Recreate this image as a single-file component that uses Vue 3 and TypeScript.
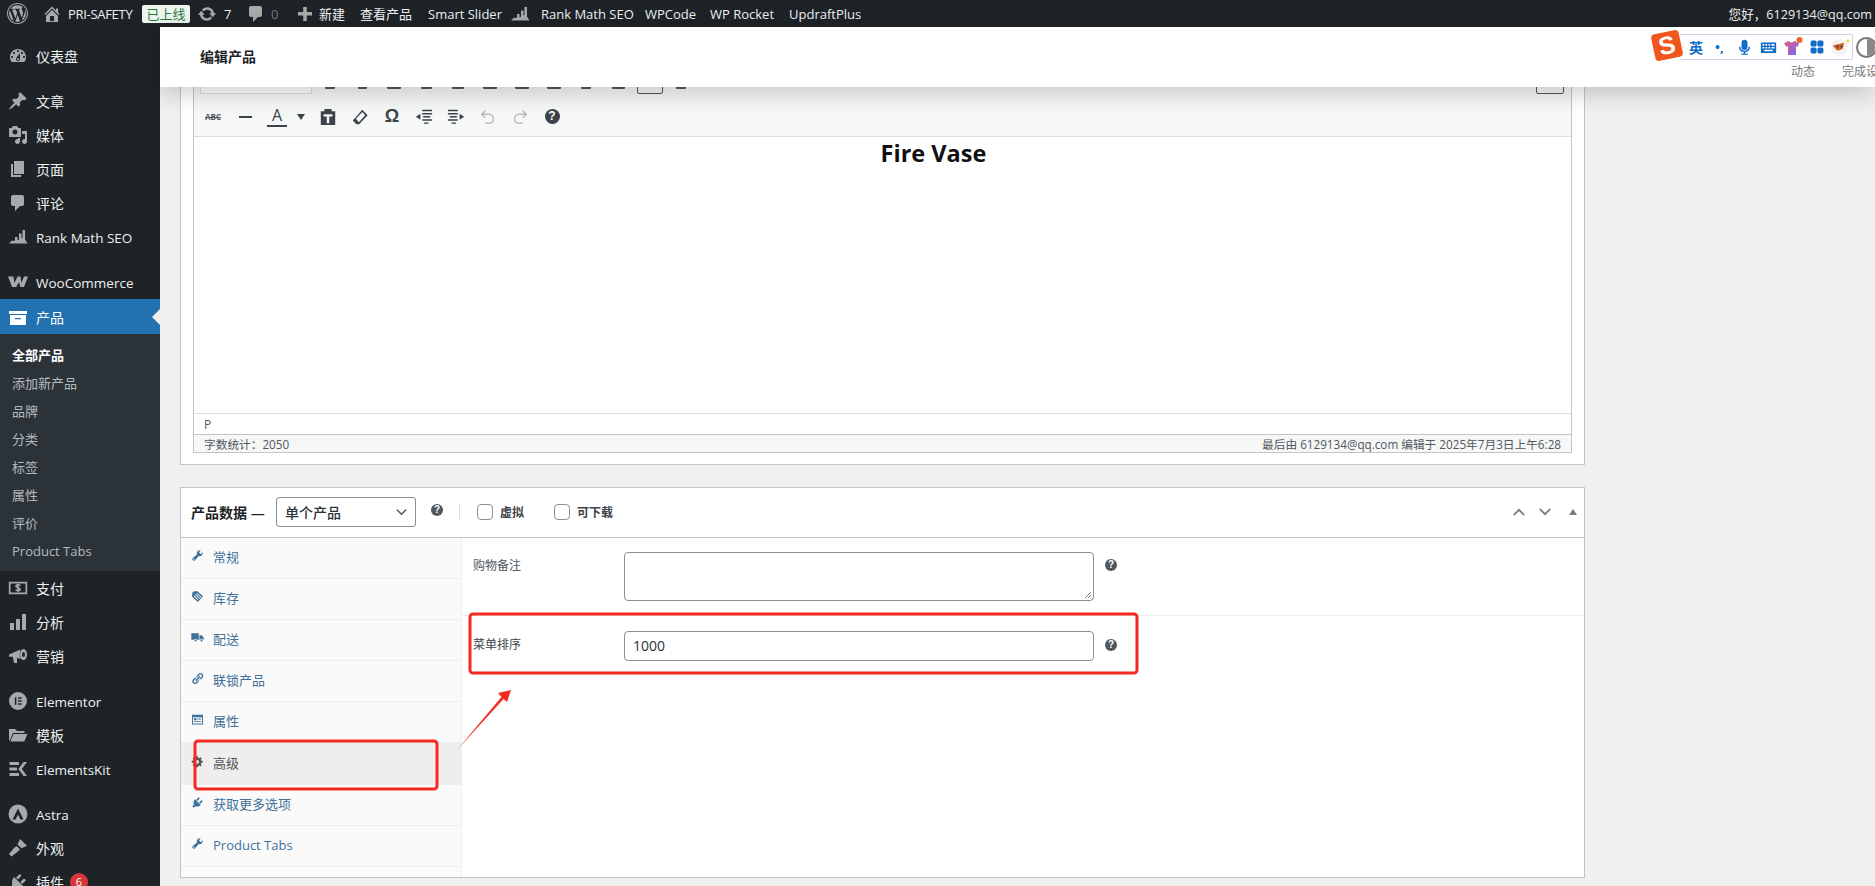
<script setup lang="ts">
interface Ico { d: string; s?: string }
interface MenuItem { label: string; icon: Ico; sep?: boolean; active?: boolean; badge?: string }

const p = {
  wp: 'M20 10c0-5.52-4.48-10-10-10S0 4.48 0 10s4.48 10 10 10 10-4.48 10-10zM10 1.01c4.96 0 8.99 4.03 8.99 8.99s-4.03 8.99-8.99 8.99S1.01 14.96 1.01 10 5.04 1.01 10 1.01zM8.01 14.82L4.96 6.61c.49-.03 1.05-.08 1.05-.08.43-.05.38-1.01-.06-.99 0 0-1.29.1-2.13.1-.15 0-.33 0-.52-.01 1.44-2.17 3.9-3.6 6.7-3.6 2.09 0 3.99.79 5.41 2.09-.6-.08-1.45.35-1.45 1.42 0 .66.38 1.22.79 1.88.31.54.5 1.22.5 2.21 0 1.34-1.27 4.48-1.27 4.48l-2.71-7.5c.48-.03.75-.16.75-.16.43-.05.38-1.1-.05-1.08 0 0-1.3.11-2.14.11-.78 0-2.11-.11-2.11-.11-.43-.02-.48 1.06-.05 1.08l.84.08 1.12 3.04zm6.02 2.15L16.64 10s.67-1.69.39-3.81c.63 1.14.94 2.42.94 3.81 0 2.96-1.56 5.58-3.94 6.97zM2.68 6.77L6.5 17.25c-2.67-1.3-4.47-4.08-4.47-7.25 0-1.16.2-2.23.65-3.23zm7.45 4.53l2.29 6.25c-.75.27-1.57.42-2.42.42-.72 0-1.41-.11-2.06-.3z',
  home: 'M16 8.5l1.53 1.53-1.06 1.06L10 4.62l-6.47 6.47-1.06-1.06L10 2.5l4 4v-2h2v4zm-6-2.46l6 5.99V18H4v-5.97zM12 17v-5H8v5h4z',
  update: 'M10.2 3.28c3.53 0 6.43 2.61 6.92 6h2.08l-3.5 4-3.5-4h2.32c-.45-1.97-2.21-3.45-4.32-3.45-1.45 0-2.73.71-3.54 1.78L4.95 5.66C6.23 4.2 8.11 3.28 10.2 3.28zm-.4 13.44c-3.52 0-6.43-2.61-6.92-6H.8l3.5-4c1.17 1.33 2.33 2.67 3.5 4H5.48c.45 1.97 2.21 3.45 4.32 3.45 1.45 0 2.73-.71 3.54-1.78l1.71 1.95c-1.28 1.46-3.15 2.38-5.25 2.38z',
  comment: 'M5 2h9c1.1 0 2 .9 2 2v7c0 1.1-.9 2-2 2h-2l-5 5v-5H5c-1.1 0-2-.9-2-2V4c0-1.1.9-2 2-2z',
  plus: 'M17 8v3.5h-5.2V17H8.2v-5.500H3V8h5.200V3h3.600v5z',
  dash: 'M3.76 16h12.48c1.1-1.37 1.76-3.11 1.76-5 0-4.42-3.58-8-8-8s-8 3.58-8 8c0 1.89.66 3.63 1.76 5zM10 4c.55 0 1 .45 1 1s-.45 1-1 1-1-.45-1-1 .45-1 1-1zM6 6c.55 0 1 .45 1 1s-.45 1-1 1-1-.45-1-1 .45-1 1-1zm8 0c.55 0 1 .45 1 1s-.45 1-1 1-1-.45-1-1 .45-1 1-1zm-5.37 5.55L12 7v6c0 1.1-.9 2-2 2s-2-.9-2-2c0-.57.24-1.08.63-1.45zM4 10c.55 0 1 .45 1 1s-.45 1-1 1-1-.45-1-1 .45-1 1-1zm12 0c.55 0 1 .45 1 1s-.45 1-1 1-1-.45-1-1 .45-1 1-1zm-5 3c0-.55-.45-1-1-1s-1 .45-1 1 .45 1 1 1 1-.45 1-1z',
  pin: 'M10.44 3.02l1.82-1.82 6.36 6.35-1.83 1.82c-1.05-.68-2.48-.57-3.41.36l-.75.75c-.92.93-1.04 2.35-.35 3.41l-1.83 1.82-2.41-2.41-2.8 2.79c-.42.42-3.38 2.71-3.8 2.29s1.86-3.39 2.28-3.81l2.79-2.79L4.1 9.36l1.83-1.82c1.05.69 2.48.57 3.4-.36l.75-.75c.93-.92 1.05-2.35.36-3.41z',
  media: 'M13 11V4c0-.55-.45-1-1-1h-1.67L9 1H5L3.67 3H2c-.55 0-1 .45-1 1v7c0 .55.45 1 1 1h10c.55 0 1-.45 1-1zM7 4.5c1.38 0 2.5 1.12 2.5 2.5S8.38 9.5 7 9.5 4.5 8.38 4.5 7 5.62 4.5 7 4.5zM14 6h5v10.5c0 1.38-1.12 2.5-2.5 2.5S14 17.88 14 16.5s1.12-2.5 2.5-2.5c.17 0 .34.02.5.05V9h-3V6zm-4 8.05V13h2v3.5c0 1.38-1.12 2.5-2.5 2.5S7 17.88 7 16.5 8.12 14 9.5 14c.17 0 .34.02.5.05z',
  page: 'M6 15V2h10v13H6zm-1 1h8v2H3V5h2v11z',
  rank: 'M1 16.5l3-3 2 .5 1-.6V10h2.5v3.6l1.5-1V6.5h2.500v5l1-.8V3h2.500v9.500l2.500 4H1z',
  woo: 'M0 4.500h5.500l.8 6.500L9.600 4.500h2.900l.9 6.500 2.600-6.500H20l-4 10.500h-3.700L11 10l-2.800 5H4.100z',
  archive: 'M19 4v3H1V4h18zM2 8h16v10H2V8zm5 3v1.2h6V11H7z',
  pay: 'M.8 3.8h18.4v12.4H.8zM2.5 5.5v9h15v-9z',
  bars: 'M2 11h4v7H2zM8 7h4v11H8zM14 2h4v16h-4z',
  mega: 'M1 8.500l11.500-5C11.500 6.500 11.500 10 12.500 13L9 11.800V17H6l-1.200-6.300L1 10.700zM15.500 3a3.500 5.500 0 1 1 0 11 3.500 5.500 0 0 1 0-11zm0 3a1.500 2.500 0 1 0 0 5 1.500 2.500 0 0 0 0-5z',
  elementor: 'M10 1a9 9 0 1 0 0 18 9 9 0 0 0 0-18zM6.800 6.200h1.600v7.600H6.800zM10 6.200h3.600v1.500H10zM10 9.200h3.600v1.500H10zM10 12.300h3.600v1.500H10z',
  folder: 'M1 4h6l2 2h7.500v2H5L1.800 15.500 1 15zM5.500 9H19.500l-3.200 7.500H2.300z',
  ekit: 'M1.500 3h9.500v3H1.500zM1.500 8.500h7.500v3H1.500zM1.500 14h9.500v3H1.500zM15.500 3H19l-5.200 7 5.200 7h-3.500l-5.200-7z',
  astra: 'M10 .5a9.500 9.500 0 1 0 0 19 9.500 9.500 0 0 0 0-19zM10 4.500l5.500 11h-3L10 10.500l-2.500 5h-3z',
  brush: 'M8.500 8l3.500 3.500-2.400 2.200-6.200 4.800-2.400-2.400 5-6.200zM9.500 6.500L12 1l7 6.800-5.500 2.400z',
  plug: 'M13.11 4.36L9.87 7.6 8 5.73l3.24-3.24c.35-.34 1.05-.2 1.56.32.52.51.66 1.21.31 1.55zm-8 1.77l.91-1.12 9.01 9.01-1.19.84c-.71.71-2.63 1.16-3.82 1.16H6.14L4.9 17.26c-.59.59-1.54.59-2.12 0-.59-.58-.59-1.53 0-2.12l1.24-1.24v-3.88c0-1.13.4-3.19 1.09-3.89zm7.26 3.97l3.24-3.24c.34-.35 1.04-.21 1.55.31.52.51.66 1.21.31 1.55l-3.24 3.25z',
  wrench: 'M16.68 9.77c-1.34 1.34-3.3 1.67-4.95.99l-5.41 6.52c-.99.99-2.59.99-3.58 0s-.99-2.59 0-3.58l6.52-5.41c-.68-1.65-.35-3.61.99-4.95 1.28-1.28 3.12-1.62 4.72-1.06l-2.89 2.89 2.82 2.82 2.86-2.87c.53 1.58.18 3.39-1.08 4.65zM3.81 16.21c.4.39 1.04.39 1.43 0 .4-.4.4-1.04 0-1.43-.39-.4-1.03-.4-1.43 0-.39.39-.39 1.03 0 1.43z',
  tag: 'M9.500 1.500l9 8-8 9-9-8.500 1-7.500zM7 6l-1 1 7 6.500 1-1zM9.500 4.500l-1 1 7 6.500 1-1zM5 8.500l-1 1 6.500 6 1-1z',
  truck: 'M.5 3.500h11.500v10H9a2.200 2.200 0 0 0-4.200 0H.5zM13 6.500h3.500l3 3.500v3.500h-1.200a2.200 2.200 0 0 0-4.200 0H13zM7 13a1.600 1.600 0 1 1 0 3.200A1.600 1.600 0 0 1 7 13zm9.200 0a1.600 1.600 0 1 1 0 3.200 1.600 1.600 0 0 1 0-3.200z',
  link: 'M17.74 2.76c1.68 1.69 1.68 4.41 0 6.1l-1.53 1.52c-1.12 1.12-2.7 1.47-4.14 1.09l2.62-2.61.76-.77.76-.76c.84-.84.84-2.2 0-3.04-.84-.85-2.2-.85-3.04 0l-.77.76-3.38 3.38c-.37-1.44-.02-3.02 1.1-4.14l1.52-1.53c1.69-1.68 4.42-1.68 6.1 0zM8.59 13.43l5.34-5.34c.42-.42.42-1.1 0-1.52-.44-.43-1.13-.39-1.53 0l-5.33 5.34c-.42.42-.42 1.1 0 1.52.44.43 1.13.39 1.52 0zm-.76 2.29l4.14-4.15c.38 1.44.03 3.02-1.09 4.14l-1.52 1.53c-1.69 1.68-4.41 1.68-6.1 0-1.68-1.68-1.68-4.42 0-6.1l1.53-1.52c1.12-1.12 2.7-1.47 4.14-1.1l-4.14 4.15c-.85.84-.85 2.2 0 3.05.84.84 2.2.84 3.04 0z',
  attr: 'M1.500 2.500h17v15h-17zM3 6.500v9.500h14V6.500zM4.500 8h4v3h-4zM10 8.500h5.500v1.500H10zM4.500 12.500h11v1.500h-11z',
  gear: 'M18 12h-2.18c-.17.7-.44 1.35-.81 1.93l1.54 1.54-2.1 2.1-1.54-1.54c-.58.36-1.23.63-1.91.79V19H8v-2.18c-.68-.16-1.33-.43-1.91-.79l-1.54 1.54-2.12-2.12 1.54-1.54c-.36-.58-.63-1.23-.79-1.91H1V9.03h2.17c.16-.7.44-1.35.8-1.94L2.43 5.55l2.1-2.1 1.54 1.54c.58-.37 1.24-.64 1.93-.81V2h3v2.18c.68.16 1.33.43 1.91.79l1.54-1.54 2.12 2.12-1.54 1.54c.36.59.64 1.24.8 1.94H18V12zm-8.5 1.5c1.66 0 3-1.34 3-3s-1.34-3-3-3-3 1.34-3 3 1.34 3 3 3z',
  paste: 'M2 3.500h4V1h8v2.500h4V19H2zM5 7v2.500h3.600V17h2.800V9.500H15V7z',
  eraser: 'M12.500 2L18.500 8 9 18H6L2 14zM12.500 4.500L5.500 12 8.500 15.500 9 15.500 15.800 8z',
  outdent: 'M8 2h11v1.600H8zM8 5.500h11v1.600H8zM9 9h8v1.600H9zM8 12.500h11v1.600H8zM10 16h5v1.600h-5zM1 9.800l5-3.300v6.600z',
  indent: 'M1 2h11v1.600H1zM1 5.500h11v1.600H1zM3 9h8v1.600H3zM1 12.500h11v1.600H1zM5 16h5v1.600H5zM19 9.800l-5-3.300v6.600z',
  mic: 'M10 1a3.500 3.500 0 0 1 3.500 3.500v5a3.500 3.500 0 0 1-7 0v-5A3.500 3.500 0 0 1 10 1zM3.500 9h1.600a4.900 4.900 0 0 0 9.800 0h1.600a6.500 6.500 0 0 1-5.700 6.400V17h3v1.600H6.200V17h3v-1.600A6.500 6.500 0 0 1 3.500 9z',
  kbd: 'M1 4h18v12.500H1zM3 6v2h2V6zm3.500 0v2h2V6zM10 6v2h2V6zm3.500 0v2h3.500V6zM3 9.300v2h2v-2zm3.500 0v2h2v-2zm3.500 0v2h2v-2zm3.500 0v2h3.500v-2zM5 12.700v1.800h10v-1.800z'
}

const menu: MenuItem[] = [
  { label: '仪表盘', icon: { d: p.dash } },
  { label: '文章', icon: { d: p.pin }, sep: true },
  { label: '媒体', icon: { d: p.media } },
  { label: '页面', icon: { d: p.page } },
  { label: '评论', icon: { d: p.comment } },
  { label: 'Rank Math SEO', icon: { d: p.rank } },
  { label: 'WooCommerce', icon: { d: p.woo }, sep: true },
  { label: '产品', icon: { d: p.archive }, active: true }
]
const sub = ['全部产品', '添加新产品', '品牌', '分类', '标签', '属性', '评价', 'Product Tabs']
const menu2: MenuItem[] = [
  { label: '支付', icon: { d: p.pay, s: 'M12.300 7.600c-.7-1-4.400-1.200-4.400.6 0 2 4.400.9 4.400 3.200 0 1.700-3.900 1.500-4.700.4M10 5.800v8.400' } },
  { label: '分析', icon: { d: p.bars } },
  { label: '营销', icon: { d: p.mega } },
  { label: 'Elementor', icon: { d: p.elementor }, sep: true },
  { label: '模板', icon: { d: p.folder } },
  { label: 'ElementsKit', icon: { d: p.ekit } },
  { label: 'Astra', icon: { d: p.astra }, sep: true },
  { label: '外观', icon: { d: p.brush } },
  { label: '插件', icon: { d: p.plug }, badge: '6' }
]
const tabs = [
  { label: '常规', d: p.wrench },
  { label: '库存', d: p.tag },
  { label: '配送', d: p.truck },
  { label: '联锁产品', d: p.link },
  { label: '属性', d: p.attr },
  { label: '高级', d: p.gear, active: true },
  { label: '获取更多选项', d: p.plug },
  { label: 'Product Tabs', d: p.wrench }
]
const stubWidths = [10, 9, 14, 11, 12, 14, 14, 14, 10, 13]
const isLatin = (s: string) => /^[\x00-\x7F]+$/.test(s)
</script>

<template>
  <div class="page">
    <header class="adminbar">
      <svg class="ab-wp" viewBox="0 0 20 20"><path :d="p.wp" fill-rule="evenodd" /></svg>
      <svg class="ab-home" viewBox="0 0 20 20"><path :d="p.home" /></svg>
      <span class="ab-text ab-site">PRI-SAFETY</span>
      <span class="ab-live">已上线</span>
      <svg class="ab-upd" viewBox="0 0 20 20"><path :d="p.update" /></svg>
      <span class="ab-text ab-n">7</span>
      <svg class="ab-cmt" viewBox="0 0 20 20"><path :d="p.comment" /></svg>
      <span class="ab-text ab-zero">0</span>
      <svg class="ab-plus" viewBox="0 0 20 20"><path :d="p.plus" /></svg>
      <span class="ab-text ab-new">新建</span>
      <span class="ab-text ab-view">查看产品</span>
      <span class="ab-text ab-slider">Smart Slider</span>
      <svg class="ab-rank" viewBox="0 0 20 20"><path :d="p.rank" /></svg>
      <span class="ab-text ab-rm">Rank Math SEO</span>
      <span class="ab-text ab-wpc">WPCode</span>
      <span class="ab-text ab-wpr">WP Rocket</span>
      <span class="ab-text ab-upp">UpdraftPlus</span>
      <span class="ab-text ab-hello">您好，6129134@qq.com</span>
    </header>

    <div class="shell">
      <aside class="side">
        <div class="menu">
          <div v-for="m in menu" :key="m.label" class="item" :class="{ sep: m.sep, active: m.active }">
            <span class="ic"><svg viewBox="0 0 20 20"><path :d="m.icon.d" fill-rule="evenodd" /></svg></span>
            <span :class="isLatin(m.label) ? 'lat' : 'zh'">{{ m.label }}</span>
          </div>
          <div class="submenu">
            <div v-for="(s, i) in sub" :key="s" class="subitem" :class="{ cur: i === 0 }">{{ s }}</div>
          </div>
          <div v-for="m in menu2" :key="m.label" class="item" :class="{ sep: m.sep }">
            <span class="ic">
              <svg viewBox="0 0 20 20">
                <path :d="m.icon.d" fill-rule="evenodd" />
                <path v-if="m.icon.s" :d="m.icon.s" class="ic-stroke" />
              </svg>
            </span>
            <span :class="isLatin(m.label) ? 'lat' : 'zh'">{{ m.label }}</span>
            <span v-if="m.badge" class="badge">{{ m.badge }}</span>
          </div>
        </div>
      </aside>

      <main class="main">
        <section class="box editor-box">
          <div class="editor">
            <div class="tb">
              <div class="tb-row1">
                <div class="tb-select"></div>
                <div class="stubs">
                  <span v-for="(w, n) in stubWidths" :key="n" class="stub"><i :style="{ width: w + 'px' }"></i></span>
                </div>
                <div class="stub-box"></div>
                <span class="stub stub-last"><i></i></span>
                <div class="stub-full"></div>
              </div>
              <div class="tb-row2">
                <span class="tbtn tb-abc">ABC</span>
                <span class="tbtn"><i class="hr-ic"></i></span>
                <span class="tbtn"><span class="tb-a">A</span></span>
                <span class="caret"></span>
                <span class="tbtn tb-paste"><svg viewBox="0 0 20 20"><path :d="p.paste" fill-rule="evenodd" /></svg></span>
                <span class="tbtn"><svg viewBox="0 0 20 20"><path :d="p.eraser" fill-rule="evenodd" /></svg></span>
                <span class="tbtn tb-omega">Ω</span>
                <span class="tbtn"><svg viewBox="0 0 20 20"><path :d="p.outdent" /></svg></span>
                <span class="tbtn"><svg viewBox="0 0 20 20"><path :d="p.indent" /></svg></span>
                <span class="tbtn">
                  <svg viewBox="0 0 20 20"><path d="M7 3L3 7l4 4M3.500 7h7.500a5 5 0 0 1 0 10H7" class="und" /></svg>
                </span>
                <span class="tbtn">
                  <svg viewBox="0 0 20 20"><path d="M13 3l4 4-4 4M16.500 7H9a5 5 0 0 0 0 10h4" class="und" /></svg>
                </span>
                <span class="tbtn"><span class="help help-lg">?</span></span>
              </div>
            </div>
            <div class="content"><h1>Fire Vase</h1></div>
            <div class="path">P</div>
            <div class="status">
              <span>字数统计：2050</span>
              <span>最后由 6129134@qq.com 编辑于 2025年7月3日上午6:28</span>
            </div>
          </div>
        </section>

        <section class="box data-box">
          <div class="data-head">
            <b class="dh-title">产品数据 —</b>
            <div class="select">
              <span>单个产品</span>
              <svg viewBox="0 0 12 8"><path d="M1 1.500l5 5 5-5" /></svg>
            </div>
            <span class="help dh-help">?</span>
            <i class="dh-div"></i>
            <span class="cb"></span><b class="cb-l">虚拟</b>
            <span class="cb cb2"></span><b class="cb-l">可下载</b>
            <div class="toggles">
              <svg viewBox="0 0 16 10"><path d="M2 8.500L8 2.500l6 6" /></svg>
              <svg viewBox="0 0 16 10"><path d="M2 1.500l6 6 6-6" /></svg>
              <i class="tri"></i>
            </div>
          </div>
          <div class="data-body">
            <nav class="tabs">
              <div v-for="t in tabs" :key="t.label" class="tab" :class="{ on: t.active }">
                <svg viewBox="0 0 20 20"><path :d="t.d" fill-rule="evenodd" /></svg>
                <span>{{ t.label }}</span>
              </div>
              <div class="tabs-rest"></div>
            </nav>
            <div class="panel">
              <div class="field f1">
                <label>购物备注</label>
                <div class="textarea"><svg viewBox="0 0 10 10"><path d="M9 3L3 9M9 6L6 9" /></svg></div>
                <span class="help">?</span>
              </div>
              <div class="field f2">
                <label>菜单排序</label>
                <div class="input">1000</div>
                <span class="help">?</span>
              </div>
            </div>
          </div>
        </section>
      </main>
    </div>

    <div class="stickyhead">
      <span class="sh-title">编辑产品</span>
      <div class="sogou">
        <div class="s-logo">S</div>
        <div class="s-bar">
          <span class="s-zh">英</span>
          <span class="s-punc">•,</span>
          <svg class="s-ic s-mic" viewBox="0 0 20 20"><path :d="p.mic" /></svg>
          <svg class="s-ic s-kbd" viewBox="0 0 20 20"><path :d="p.kbd" fill-rule="evenodd" /></svg>
          <svg class="s-ic s-shirt" viewBox="0 0 20 20">
            <defs>
              <linearGradient id="shirtg" x1="0" y1="0" x2="1" y2="1">
                <stop offset="0" stop-color="#ec5a86" />
                <stop offset="1" stop-color="#6a6cf0" />
              </linearGradient>
            </defs>
            <path d="M5 4l3.500 1.500L12 4l4 2.500-1.500 3.500-1.500-1v9H5V9l-1.500 1L1 6.500z" fill="url(#shirtg)" />
            <circle cx="16.500" cy="3" r="3" fill="#f0622d" />
          </svg>
          <svg class="s-ic s-grid" viewBox="0 0 20 20">
            <rect x="2" y="2" width="7.500" height="7.500" rx="2" /><rect x="10.500" y="2" width="7.500" height="7.500" rx="2" />
            <rect x="2" y="10.500" width="7.500" height="7.500" rx="2" /><rect x="10.500" y="10.500" width="7.500" height="7.500" rx="2" />
          </svg>
          <svg class="s-ic s-fox" viewBox="0 0 20 20">
            <circle cx="9" cy="10" r="8" fill="#f3f3f1" />
            <path d="M2.500 8l11-2.500-1.500 6-5 1.500z" fill="#d8622e" />
            <circle cx="7" cy="9" r="1" fill="#333" /><circle cx="11" cy="9" r="1" fill="#333" />
            <path d="M17 1l.8 2 2 .8-2 .8-.8 2-.8-2-2-.8 2-.8z" fill="#f0d75a" />
          </svg>
        </div>
        <div class="s-circle"><i></i></div>
      </div>
      <div class="sh-links"><span>动态</span><span>完成设置</span></div>
    </div>

    <svg class="marks" viewBox="0 0 1875 886">
      <rect x="470" y="614" width="667" height="59" rx="3" />
      <rect x="195" y="741" width="242" height="48" rx="3" />
      <path class="arrow" d="M457 750L501.500 697 498 693 511 690 507 702 503.500 699z" />
    </svg>
  </div>
</template>

<style scoped>
.page {
  position: relative;
  width: 1875px;
  height: 886px;
  overflow: hidden;
  background: #f0f0f1;
  font-family: "Open Sans", "Noto Sans CJK SC", sans-serif;
  font-size: 13px;
  color: #3c434a;
}
svg { display: block; fill: currentColor; }

/* admin bar */
.adminbar {
  height: 27px;
  background: #1d2327;
  display: flex;
  align-items: center;
  color: #a7aaad;
}
.ab-text { color: #f0f0f1; white-space: nowrap; font-size: 13px; }
.ab-wp { width: 21px; height: 21px; margin-left: 7px; }
.ab-home { width: 20px; height: 20px; margin-left: 14px; }
.ab-site { margin-left: 6px; width: 66px; letter-spacing: -.3px; }
.ab-live {
  margin-left: 8px;
  width: 48px;
  height: 18px;
  line-height: 18px;
  text-align: center;
  background: #edf5ee;
  color: #2a7a42;
  border-radius: 2px;
  font-size: 13px;
}
.ab-upd { width: 20px; height: 20px; margin-left: 7px; }
.ab-n { margin-left: 7px; width: 12px; }
.ab-cmt { width: 20px; height: 20px; margin-left: 10px; }
.ab-zero { margin-left: 5px; width: 12px; color: #787c82; }
.ab-plus { width: 20px; height: 20px; margin-left: 12px; }
.ab-new { margin-left: 4px; width: 26px; }
.ab-view { margin-left: 15px; width: 53px; }
.ab-slider { margin-left: 15px; width: 70px; }
.ab-rank { width: 20px; height: 20px; margin-left: 12px; }
.ab-rm { margin-left: 11px; width: 93px; }
.ab-wpc { margin-left: 11px; width: 52px; }
.ab-wpr { margin-left: 13px; width: 64px; }
.ab-upp { margin-left: 15px; width: 70px; }
.ab-hello { margin-left: auto; margin-right: 3px; font-size: 12.600px; }

/* shell */
.shell { display: flex; height: 859px; }
.side { width: 160px; flex: none; background: #1d2327; color: #f0f0f1; overflow: hidden; }
.menu { padding-top: 12px; }
.item {
  height: 34px;
  display: flex;
  align-items: center;
  color: #f0f0f1;
}
.zh { font-size: 14px; }
.lat { font-size: 13.500px; padding-top: 2px; }
.item.sep { margin-top: 11px; }
.ic { width: 36px; flex: none; color: #a7aaad; padding-left: 8px; box-sizing: border-box; }
.ic svg { width: 20px; height: 20px; }
.ic-stroke { fill: none; stroke: currentColor; stroke-width: 1.500; }
.item.active { height: 35px; background: #2271b1; color: #fff; position: relative; }
.item.active .ic { color: #fff; }
.item.active::after {
  content: "";
  position: absolute;
  right: 0;
  top: 10px;
  border: 8px solid transparent;
  border-right-color: #f0f0f1;
  border-left: 0;
}
.badge {
  width: 18px;
  height: 18px;
  margin-left: 6px;
  border-radius: 50%;
  background: #d63638;
  color: #fff;
  font-size: 11px;
  line-height: 18px;
  text-align: center;
}
.submenu { background: #2c3338; height: 237px; padding-top: 7px; box-sizing: border-box; }
.subitem { height: 28px; line-height: 28px; padding-left: 12px; font-size: 13px; color: rgba(240, 246, 252, .7); }
.subitem.cur { color: #fff; font-weight: 700; }

/* main */
.main { flex: 1; min-width: 0; padding: 33px 290px 0 20px; }
.box { background: #fff; border: 1px solid #c3c4c7; box-sizing: border-box; }
.editor-box { height: 405px; padding: 0 12px; }
.editor { height: 392px; display: flex; flex-direction: column; border: 1px solid #c3c4c7; border-top: 0; box-sizing: border-box; }
.tb { height: 76px; background: #f6f7f7; border-bottom: 1px solid #dcdcde; flex: none; box-sizing: border-box; }
.tb-row1 { height: 36px; display: flex; align-items: flex-end; padding-bottom: 3px; box-sizing: border-box; }
.tb-select { width: 112px; height: 28px; margin-left: 6px; background: #fff; border: 1px solid #dcdcde; box-sizing: border-box; flex: none; }
.stubs { display: flex; margin-left: 2px; flex: none; }
.stub { width: 32px; height: 3px; display: flex; justify-content: center; flex: none; margin-bottom: 5px; }
.stub i { display: block; width: 10px; height: 3px; background: #50575e; border-radius: 1px; }
.stub-box { width: 26px; height: 20px; margin-left: 3px; border: 1px solid #50575e; border-radius: 2px; box-sizing: border-box; flex: none; }
.stub-last { margin-left: 2px; }
.stub-full { width: 28px; height: 20px; margin-left: auto; margin-right: 7px; border: 1px solid #50575e; border-radius: 2px; box-sizing: border-box; flex: none; }
.tb-row2 { height: 39px; display: flex; align-items: center; padding-left: 3px; color: #3c434a; }
.tbtn { width: 32px; height: 32px; display: flex; align-items: center; justify-content: center; flex: none; }
.tbtn svg { width: 18px; height: 18px; }
.tb-abc { font-size: 8px; font-weight: 700; text-decoration: line-through; color: #50575e; }
.hr-ic { width: 13px; height: 2px; background: #3c434a; }
.tb-a { width: 20px; text-align: center; font-size: 16px; line-height: 19px; border-bottom: 2px solid #3c434a; }
.caret { width: 15px; display: flex; justify-content: center; flex: none; }
.caret::after { content: ""; border: 4px solid transparent; border-top: 6px solid #3c434a; border-bottom: 0; }
.tb-paste { margin-left: 4px; }
.tb-omega { font-size: 18px; font-weight: 700; font-family: "Liberation Sans", sans-serif; }
.und { fill: none; stroke: #bbb; stroke-width: 1.800; }
.help {
  width: 12px;
  height: 12px;
  border-radius: 50%;
  background: #50575e;
  color: #fff;
  font-size: 10px;
  font-weight: 700;
  line-height: 12px;
  text-align: center;
  display: block;
  flex: none;
  font-family: "Liberation Sans", sans-serif;
}
.help-lg { width: 15px; height: 15px; line-height: 15px; font-size: 12px; background: #3c434a; }
.content { flex: 1; background: #fff; border-bottom: 1px solid #dcdcde; padding-left: 102px; }
.content h1 {
  margin: 1px 0 0;
  text-align: center;
  font-size: 23.500px;
  line-height: 30px;
  font-weight: 700;
  color: #111;
}
.path { height: 21px; line-height: 22px; padding-left: 10px; font-size: 12px; color: #50575e; background: #fff; border-bottom: 1px solid #c3c4c7; flex: none; box-sizing: border-box; }
.status { height: 17px; line-height: 18px; padding: 0 10px; display: flex; justify-content: space-between; font-size: 11.700px; color: #50575e; background: #f6f7f7; flex: none; }

/* product data */
.data-box { height: 391px; margin-top: 22px; display: flex; flex-direction: column; }
.data-head { height: 50px; border-bottom: 1px solid #c3c4c7; display: flex; align-items: center; flex: none; box-sizing: border-box; padding: 0 0 2px 10px; }
.dh-title { font-size: 14px; color: #1d2327; width: 85px; font-weight: 600; white-space: nowrap; }
.select {
  width: 140px;
  height: 30px;
  border: 1px solid #8c8f94;
  border-radius: 3px;
  box-sizing: border-box;
  display: flex;
  align-items: center;
  justify-content: space-between;
  padding: 0 8px;
  font-size: 14px;
  font-weight: 500;
  color: #2c3338;
}
.select svg { width: 11px; height: 8px; fill: none; stroke: #50575e; stroke-width: 1.600; }
.dh-help { margin-left: 15px; margin-top: -4px; }
.dh-div { width: 1px; height: 15px; background: #dcdcde; margin-left: 16px; }
.cb { width: 16px; height: 16px; border: 1px solid #8c8f94; border-radius: 4px; box-sizing: border-box; margin-left: 17px; flex: none; }
.cb2 { margin-left: 30px; }
.cb-l { font-size: 12px; font-weight: 600; margin-left: 7px; color: #3c434a; }
.toggles { margin-left: auto; margin-right: 7px; display: flex; align-items: center; color: #787c82; }
.toggles svg { width: 14px; height: 10px; margin-right: 12px; fill: none; stroke: #787c82; stroke-width: 2; }
.tri { border: 4.500px solid transparent; border-bottom: 6px solid #787c82; border-top: 0; margin-left: 5px; }

.data-body { flex: 1; display: flex; min-height: 0; }
.tabs { width: 281px; flex: none; background: #fafafa; border-right: 1px solid #eee; box-sizing: border-box; display: flex; flex-direction: column; }
.tab { height: 41px; display: flex; align-items: center; padding: 0 0 3px 10px; border-bottom: 1px solid #eee; box-sizing: border-box; color: #3f7099; font-size: 13px; flex: none; }
.tab svg { width: 13px; height: 13px; margin-right: 9px; margin-bottom: 2px; flex: none; }
.tab.on { background: #eee; color: #555; height: 42px; border-bottom: 0; }
.tabs-rest { flex: 1; }
.panel { flex: 1; background: #fff; }
.field { display: flex; align-items: flex-start; padding-left: 11px; }
.field label { width: 151px; flex: none; font-size: 12px; color: #50575e; }
.f1 { height: 78px; padding-top: 14px; box-sizing: border-box; border-bottom: 1px solid #eee; }
.f1 label { padding-top: 4px; }
.f1 .help { margin: 7px 0 0 11px; }
.f2 { padding-top: 15px; }
.f2 label { padding-top: 4px; color: #3c434a; }
.f2 .help { margin: 8px 0 0 11px; }
.textarea {
  width: 470px;
  height: 49px;
  border: 1px solid #8c8f94;
  border-radius: 4px;
  box-sizing: border-box;
  position: relative;
}
.textarea svg { position: absolute; right: 1px; bottom: 1px; width: 10px; height: 10px; fill: none; stroke: #777; stroke-width: 1; }
.input {
  width: 470px;
  height: 30px;
  line-height: 28px;
  border: 1px solid #8c8f94;
  border-radius: 4px;
  box-sizing: border-box;
  padding-left: 8px;
  font-size: 14px;
  color: #2c3338;
}

/* sticky header */
.stickyhead {
  position: absolute;
  left: 160px;
  right: 0;
  top: 27px;
  height: 60px;
  background: #fff;
  box-shadow: 0 6px 24px rgba(0, 0, 0, .2);
  display: flex;
  align-items: center;
}
.sh-title { margin-left: 40px; padding-bottom: 2px; font-size: 14px; font-weight: 600; color: #1d2327; }
.sogou { position: absolute; left: 1491px; top: 7px; height: 26px; display: flex; align-items: center; }
.s-logo {
  width: 28px;
  height: 27px;
  margin-left: 2px;
  margin-top: -3px;
  background: #f0561d;
  border-radius: 4px;
  transform: rotate(-12deg);
  color: #fff;
  font: 700 25px/27px "Liberation Sans", sans-serif;
  text-align: center;
  position: relative;
  z-index: 1;
  flex: none;
}
.s-bar {
  width: 173px;
  height: 26px;
  margin-left: -1px;
  border: 1px solid #c9d6e8;
  border-left: 0;
  border-radius: 0 2px 2px 0;
  box-sizing: border-box;
  display: flex;
  align-items: center;
  padding-left: 9px;
  color: #0f6cc7;
  background: #fff;
  flex: none;
}
.s-zh { font-size: 14px; font-weight: 700; width: 14px; flex: none; }
.s-punc { font-size: 13px; font-weight: 700; margin-left: 12px; width: 12px; flex: none; }
.s-ic { width: 17px; height: 17px; flex: none; }
.s-mic { margin-left: 8.500px; }
.s-kbd { margin-left: 7.500px; }
.s-shirt { width: 20px; height: 20px; margin-left: 6px; }
.s-grid { width: 16px; height: 16px; margin-left: 6px; }
.s-fox { width: 21px; height: 21px; margin-left: 5px; }
.s-circle {
  width: 21px;
  height: 21px;
  border: 2px solid #777;
  border-radius: 50%;
  box-sizing: border-box;
  margin-left: 3px;
  overflow: hidden;
  position: relative;
  flex: none;
}
.s-circle i { position: absolute; right: 0; top: 0; width: 50%; height: 100%; background: #888; }
.sh-links {
  position: absolute;
  left: 1631px;
  top: 35px;
  display: flex;
  gap: 27px;
  font-size: 12px;
  color: #777;
  white-space: nowrap;
}

/* annotations */
.marks { position: absolute; left: 0; top: 0; width: 1875px; height: 886px; pointer-events: none; }
.marks rect { fill: none; stroke: #f4291f; stroke-width: 3; }
.arrow { fill: #f4291f; }
</style>

<style>
html, body { margin: 0; overflow: hidden; background: #f0f0f1; }
</style>
